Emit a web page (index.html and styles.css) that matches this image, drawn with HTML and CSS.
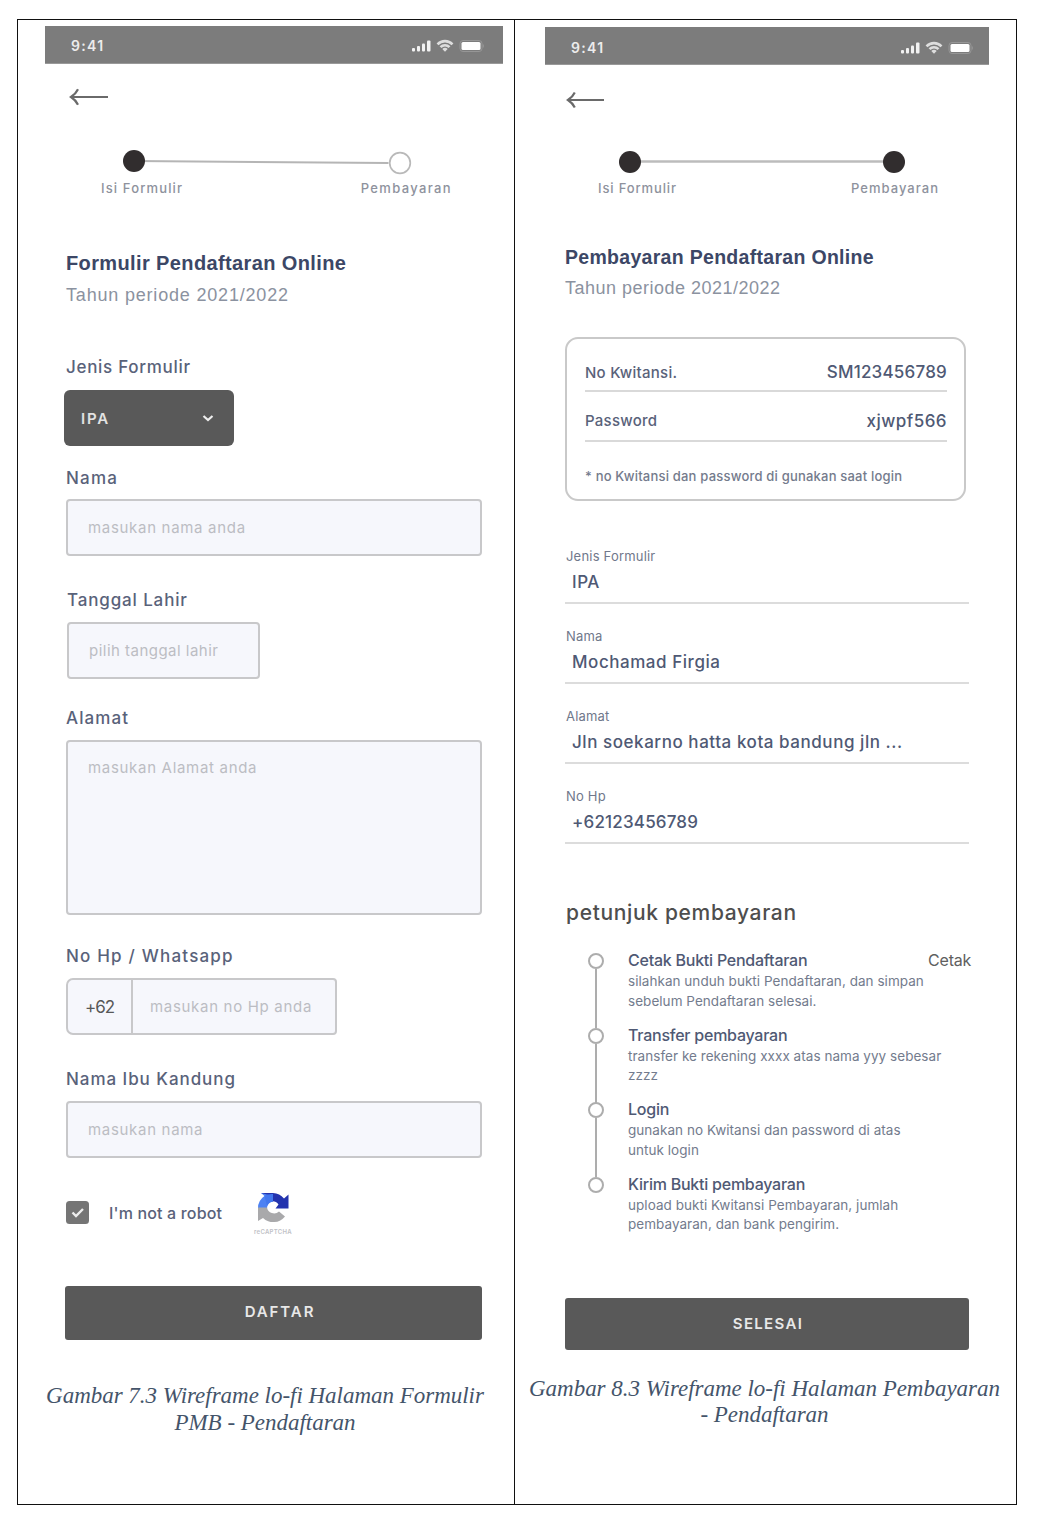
FILE: index.html
```html
<!DOCTYPE html>
<html lang="id">
<head>
<meta charset="utf-8">
<title>Wireframe lo-fi PMB</title>
<link rel="stylesheet" href="styles.css">
</head>
<body>
<svg width="0" height="0" class="defs" aria-hidden="true">
  <symbol id="status" viewBox="0 0 74 16">
    <g fill="#f2f2f2">
      <rect x="1" y="10" width="3" height="3.5" rx="1"/><rect x="6" y="8" width="3" height="5.5" rx="1"/><rect x="11" y="5.500" width="3" height="8" rx="1"/><rect x="16" y="2.500" width="3.500" height="11" rx="1"/>
    </g>
    <g fill="none" stroke="#dedede" stroke-width="2.600">
      <path d="M26.500 6.300a10.500 10.500 0 0 1 15 0"/><path d="M29.500 9.200a6.300 6.300 0 0 1 9 0"/>
    </g>
    <path d="M34 13.800l-2.700-2.800a3.800 3.800 0 0 1 5.400 0z" fill="#dedede"/>
    <rect x="49" y="2.500" width="22" height="11" rx="3" fill="none" stroke="#969696"/>
    <rect x="50.500" y="4" width="19" height="8" rx="1.500" fill="#fff"/>
    <path d="M72.300 6.500v3" stroke="#969696"/>
  </symbol>
  <symbol id="back" viewBox="0 0 40 18">
    <path d="M39 9H2M9 1.300C7.500 4.500 5 7 2 9C5 11 7.500 13.500 9 16.700" fill="none" stroke="#6a6a6a" stroke-width="2.200"/>
  </symbol>
</svg>
<main class="sheet">
  <section class="cell">
    <div class="phone phone-form">
      <header class="status"><span>9:41</span><svg width="74" height="16"><use href="#status"/></svg></header>
      <div class="body">
        <svg class="back" width="40" height="18"><use href="#back"/></svg>
        <svg class="track" width="292" height="26" viewBox="0 0 292 26">
          <path d="M14 12L268.500 14" stroke="#b5b5b5" stroke-width="2"/>
          <circle cx="14" cy="12" r="11" fill="#312d2e"/>
          <circle cx="280" cy="14" r="10.300" fill="#fff" stroke="#b9b9b9" stroke-width="1.700"/>
        </svg>
        <div class="steps-labels"><span class="sl-1">Isi Formulir</span><span class="sl-2">Pembayaran</span></div>
        <h1>Formulir Pendaftaran Online</h1>
        <p class="period">Tahun periode 2021/2022</p>
        <label class="l-jenis">Jenis Formulir</label>
        <div class="select"><span>IPA</span><svg width="14" height="10" viewBox="0 0 14 10"><path d="M2.500 3L7 7L11.500 3" fill="none" stroke="#eee" stroke-width="2.200"/></svg></div>
        <label class="l-nama">Nama</label>
        <div class="input"><span>masukan nama anda</span></div>
        <label class="l-tgl">Tanggal Lahir</label>
        <div class="input date"><span>pilih tanggal lahir</span></div>
        <label class="l-alamat">Alamat</label>
        <div class="input area"><span>masukan Alamat anda</span></div>
        <label class="l-hp">No Hp / Whatsapp</label>
        <div class="input tel"><b>+62</b><span>masukan no Hp anda</span></div>
        <label class="l-ibu">Nama Ibu Kandung</label>
        <div class="input"><span>masukan nama</span></div>
        <div class="robot">
          <svg class="check" width="23" height="23" viewBox="0 0 23 23"><rect width="23" height="23" rx="3.500" fill="#757575"/><path d="M6.500 11.500L10 15L17 8" fill="none" stroke="#ededed" stroke-width="2.400"/></svg>
          <span class="robot-text">I'm not a robot</span>
          <div class="captcha">
            <svg width="34" height="33" viewBox="0 0 34 33">
              <path d="M2 17.500A14.500 14.500 0 0 1 8.500 5L5 2H17V10.500A7 7 0 0 0 11 17.500z" fill="#4d82f3"/>
              <path d="M5 2H17A15 15 0 0 1 28 7.500L32.500 3.500V17.500H19.500L22.500 13.500A7.500 7.500 0 0 0 15 10.500V4.500z" fill="#2333ae"/>
              <path d="M8.500 5A14.500 14.500 0 0 1 17 3V10.500A7 7 0 0 0 11 15z" fill="#4277ee"/>
              <path d="M2 16.500H11A7.200 7.200 0 0 0 23 20.500L29 25.500A15 15 0 0 1 7 27L2 30z" fill="#a9a9ab"/>
            </svg>
            <small>reCAPTCHA</small>
          </div>
        </div>
        <div class="button b-daftar">DAFTAR</div>
      </div>
    </div>
    <p class="caption">Gambar 7.3 Wireframe lo-fi Halaman Formulir<br>PMB - Pendaftaran</p>
  </section>
  <section class="cell">
    <div class="phone phone-pay">
      <header class="status"><span>9:41</span><svg width="74" height="16"><use href="#status"/></svg></header>
      <div class="body">
        <svg class="back" width="39" height="18"><use href="#back"/></svg>
        <svg class="track" width="290" height="24" viewBox="0 0 290 24">
          <path d="M13 11.500H277" stroke="#bcbcbc" stroke-width="2.500"/>
          <circle cx="13" cy="12" r="11" fill="#312d2e"/>
          <circle cx="277" cy="12" r="11" fill="#312d2e"/>
        </svg>
        <div class="steps-labels"><span class="sl-1">Isi Formulir</span><span class="sl-2">Pembayaran</span></div>
        <h1>Pembayaran Pendaftaran Online</h1>
        <p class="period">Tahun periode 2021/2022</p>
        <div class="receipt">
          <div class="row"><span>No Kwitansi.</span><b>SM123456789</b></div>
          <div class="row"><span>Password</span><b class="pw">xjwpf566</b></div>
          <p>* no Kwitansi dan password di gunakan saat login</p>
        </div>
        <dl class="fields">
          <div><dt>Jenis Formulir</dt><dd>IPA</dd></div>
          <div><dt>Nama</dt><dd>Mochamad Firgia</dd></div>
          <div><dt>Alamat</dt><dd>Jln soekarno hatta kota bandung jln ...</dd></div>
          <div><dt>No Hp</dt><dd class="num">+62123456789</dd></div>
        </dl>
        <h2>petunjuk pembayaran</h2>
        <ol class="guide">
          <li><i></i><div><h3>Cetak Bukti Pendaftaran<span>Cetak</span></h3><p>silahkan unduh bukti Pendaftaran, dan simpan<br>sebelum Pendaftaran selesai.</p></div></li>
          <li><i></i><div><h3>Transfer pembayaran</h3><p>transfer ke rekening xxxx atas nama yyy sebesar<br>zzzz</p></div></li>
          <li><i></i><div><h3>Login</h3><p>gunakan no Kwitansi dan password di atas<br>untuk login</p></div></li>
          <li><i></i><div><h3>Kirim Bukti pembayaran</h3><p>upload bukti Kwitansi Pembayaran, jumlah<br>pembayaran, dan bank pengirim.</p></div></li>
        </ol>
        <div class="button b-selesai">SELESAI</div>
      </div>
    </div>
    <p class="caption">Gambar 8.3 Wireframe lo-fi Halaman Pembayaran<br>- Pendaftaran</p>
  </section>
</main>
</body>
</html>
```
FILE: styles.css
```css
* { box-sizing: border-box; margin: 0; padding: 0; }
body { background: #fff; font-family: Inter, "Noto Sans", sans-serif; color: #59627a; }
svg { display: block; flex: none; }
.defs { position: absolute; }
.sheet { display: grid; grid-template-columns: 496px 502px; width: 1000px; height: 1486px; margin: 19px 0 0 17px; border: 1px solid #111; }
.cell + .cell { border-left: 1px solid #111; }

.phone-form { width: 458px; margin: 6px 0 0 27px; }
.phone-pay { width: 444px; margin: 7px 0 0 30px; }
.status { display: flex; justify-content: space-between; align-items: center; height: 38px; padding: 2px 18px 0 26px; background: #7c7c7c; border-bottom: 1px solid #999; color: #ececec; font-weight: 600; font-size: 14px; letter-spacing: 1.300px; }
.phone-pay .status { padding: 4px 15px 0 26px; }
.body { display: flex; flex-direction: column; align-items: flex-start; padding-left: 21px; }

.back { margin: 24px 0 0 3px; }
.track { margin: 43px 0 0 54px; }
.steps-labels { display: flex; justify-content: space-between; width: 351px; margin: 3px 0 0 35px; font-size: 13px; font-weight: 500; line-height: 20px; color: #8e929d; }
.sl-1 { letter-spacing: 1.140px; }
.sl-2 { letter-spacing: 1.360px; }
h1 { margin-top: 53px; font: 700 20px/24px "Liberation Sans", sans-serif; letter-spacing: .38px; color: #3c4766; white-space: nowrap; }
.period { margin-top: 9px; font: 400 18px/22px "Liberation Sans", sans-serif; letter-spacing: .81px; color: #8b92a0; }

label { font-size: 17px; font-weight: 500; line-height: 22px; white-space: nowrap; }
.l-jenis { margin-top: 50px; letter-spacing: .7px; }
.l-nama { margin-top: 21px; letter-spacing: 1.200px; }
.l-tgl { margin: 33px 0 0 1px; letter-spacing: .86px; }
.l-alamat { margin-top: 28px; letter-spacing: 1.090px; }
.l-hp { margin-top: 30px; letter-spacing: 1.200px; }
.l-ibu { margin-top: 33px; letter-spacing: .95px; }
.select { display: flex; align-items: center; justify-content: space-between; width: 170px; height: 56px; margin: 12px 0 0 -2px; padding: 0 19px 0 17px; border-radius: 6px; background: #595959; color: #e2e2e2; font-size: 15px; font-weight: 600; letter-spacing: 1.800px; }
.input { display: flex; align-items: center; width: 416px; height: 57px; margin-top: 11px; padding-left: 20px; border: 2px solid #c8c8ca; border-radius: 4px; background: #f6f7fc; color: #bcbdc3; font-size: 15px; letter-spacing: .69px; }
.l-nama + .input { margin-top: 10px; }
.date { width: 193px; margin-left: 1px; letter-spacing: .48px; }
.area { height: 175px; align-items: flex-start; line-height: 20px; padding-top: 16px; }
.tel { width: 271px; padding: 0; border-radius: 7px 4px 4px 7px; }
.tel b { display: flex; align-items: center; justify-content: center; align-self: stretch; width: 65px; border-right: 2px solid #c8c8ca; color: #585858; font-size: 17px; font-weight: 400; letter-spacing: -1px; }
.tel span { padding-left: 17px; }
.robot { display: flex; align-items: center; height: 48px; margin-top: 31px; }
.check { margin-bottom: 2px; }
.robot-text { width: 143px; margin-left: 20px; font-size: 16px; font-weight: 500; letter-spacing: .16px; }
.captcha { display: flex; flex-direction: column; align-items: center; width: 42px; gap: 3px; }
.captcha small { font-size: 6px; font-weight: 600; line-height: 9px; letter-spacing: .28px; color: #c0c1c6; }
.button { display: flex; align-items: center; justify-content: center; border-radius: 3px; background: #595959; color: #e8e8e8; font-size: 15px; font-weight: 600; }
.b-daftar { width: 417px; height: 54px; margin: 49px 0 0 -1px; padding: 0 0 4px 13px; letter-spacing: 1.900px; }
.b-selesai { width: 404px; height: 52px; margin-top: 50px; padding: 0 0 2px 2px; letter-spacing: 1.320px; }
.caption { margin: 42px 2px 0 0; text-align: center; font: italic 400 23px/27px "Liberation Serif", serif; color: #44546a; white-space: nowrap; letter-spacing: -.02px; }
.phone-pay + .caption { margin: 26px 2px 0 0; line-height: 26px; }

.phone-pay .body { padding-left: 20px; }
.phone-pay .back { margin: 26px 0 0 1px; }
.phone-pay .track { margin: 41px 0 0 52px; }
.phone-pay .steps-labels { width: 341px; margin: 4px 0 0 33px; }
.phone-pay .sl-1 { letter-spacing: .87px; }
.phone-pay .sl-2 { letter-spacing: 1.030px; }
.phone-pay h1 { margin-top: 47px; font-size: 19.500px; letter-spacing: .3px; }
.phone-pay .period { margin-top: 8px; letter-spacing: .49px; }
.receipt { width: 401px; height: 164px; margin-top: 38px; padding: 15px 17px 0 18px; border: 2px solid #c9c9c9; border-radius: 13px; }
.row { display: flex; align-items: center; justify-content: space-between; height: 38px; border-bottom: 2px solid #d9d9d9; font-size: 15px; font-weight: 500; letter-spacing: .26px; }
.row + .row { height: 50px; padding-top: 9px; }
.row b { font-size: 17px; font-weight: 500; letter-spacing: .21px; color: #4f5974; }
.row .pw { letter-spacing: .47px; }
.receipt p { margin-top: 24px; font-size: 13px; font-weight: 500; line-height: 20px; letter-spacing: .2px; color: #747b8c; white-space: nowrap; }
.fields { width: 404px; margin-top: 45px; }
.fields div { height: 58px; margin-bottom: 22px; border-bottom: 2px solid #dcdcdc; }
.fields dt { padding-left: 1px; font-size: 13px; line-height: 20px; letter-spacing: .2px; color: #70788b; }
.fields dd { margin-top: 5px; padding-left: 7px; font-size: 17px; font-weight: 500; line-height: 22px; letter-spacing: .55px; color: #4f5974; white-space: nowrap; }
.fields .num { letter-spacing: .18px; }
h2 { margin: 33px 0 0 1px; font-size: 21px; font-weight: 500; line-height: 28px; letter-spacing: .66px; color: #4e4e4e; }
.guide { width: 406px; margin-top: 23px; list-style: none; }
.guide li { display: flex; height: 74.600px; }
.guide i { position: relative; flex: none; width: 16px; height: 16px; margin: 3px 24px 0 23px; border: 2px solid #adadad; border-radius: 50%; background: #fff; }
.guide li:not(:last-child) i::after { content: ""; position: absolute; left: 5px; top: 14px; width: 2px; height: 59px; background: #adadad; }
.guide li > div { flex: 1; }
.guide h3 { display: flex; justify-content: space-between; font-size: 16px; font-weight: 500; line-height: 20px; letter-spacing: -.24px; color: #4f5974; }
.guide h3 span { font-weight: 400; color: #606060; }
.guide p { margin-top: 2px; font-size: 13.500px; line-height: 19.500px; letter-spacing: .04px; color: #737b8d; white-space: nowrap; }
```
